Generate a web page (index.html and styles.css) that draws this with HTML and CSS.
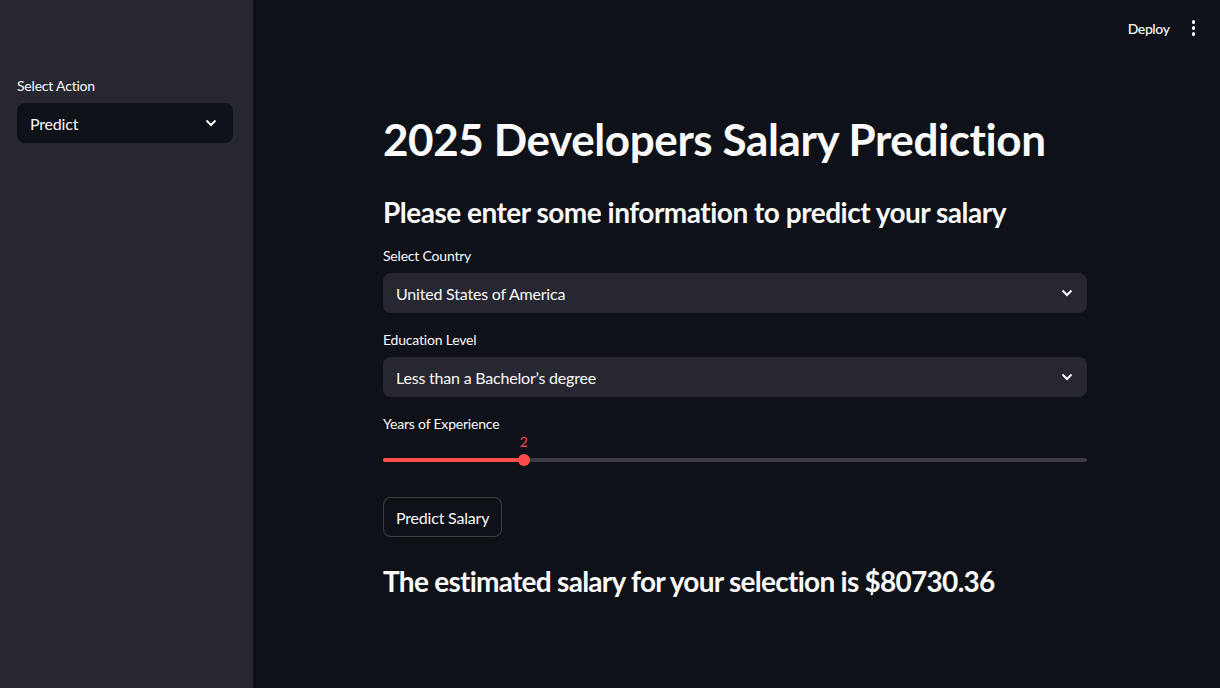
FILE: index.html
```html
<!DOCTYPE html>
<html lang="en">
<head>
<meta charset="utf-8">
<title>Salary Prediction</title>
<link rel="stylesheet" href="styles.css">
</head>
<body>
<div class="app">
  <aside class="sidebar">
    <div class="field">
      <div class="label">Select Action</div>
      <div class="select select-dark">
        <span>Predict</span>
        <svg class="chev" width="12" height="8" viewBox="0 0 12 8"><path d="M1.5 1.5 L6 6 L10.5 1.5" fill="none" stroke="#fafafa" stroke-width="2"/></svg>
      </div>
    </div>
  </aside>
  <main class="main">
    <header class="topbar">
      <span class="deploy">Deploy</span>
      <span class="kebab"><i></i><i></i><i></i></span>
    </header>
    <section class="content">
      <h1 class="title">2025 Developers Salary Prediction</h1>
      <h3 class="subtitle">Please enter some information to predict your salary</h3>
      <div class="field">
        <div class="label">Select Country</div>
        <div class="select">
          <span>United States of America</span>
          <svg class="chev" width="12" height="8" viewBox="0 0 12 8"><path d="M1.5 1.5 L6 6 L10.5 1.5" fill="none" stroke="#fafafa" stroke-width="2"/></svg>
        </div>
      </div>
      <div class="field">
        <div class="label">Education Level</div>
        <div class="select">
          <span>Less than a Bachelor’s degree</span>
          <svg class="chev" width="12" height="8" viewBox="0 0 12 8"><path d="M1.5 1.5 L6 6 L10.5 1.5" fill="none" stroke="#fafafa" stroke-width="2"/></svg>
        </div>
      </div>
      <div class="field">
        <div class="label">Years of Experience</div>
        <div class="slider">
          <div class="track">
            <div class="fill" style="width: 20%"></div>
            <div class="thumb" style="left: 20%"><span class="val">2</span></div>
          </div>
        </div>
      </div>
      <button class="btn">Predict Salary</button>
      <h3 class="result">The estimated salary for your selection is $80730.36</h3>
    </section>
  </main>
</div>
</body>
</html>
```

FILE: styles.css
```css
* { box-sizing: border-box; }
html, body { margin: 0; padding: 0; height: 100%; }
body {
  background: #0e1117;
  color: #fafafa;
  font-family: "Source Sans Pro", "Lato", "Noto Sans", sans-serif;
}
.app { display: flex; height: 688px; }
.sidebar {
  width: 253px;
  flex: none;
  background: #262730;
  padding: 76px 20px 0 17px;
}
.main { flex: 1; display: flex; flex-direction: column; }
.topbar {
  height: 56px;
  display: flex;
  align-items: center;
  justify-content: flex-end;
  padding-right: 25px;
  gap: 22px;
}
.deploy { font-size: 14px; font-weight: 500; letter-spacing: -0.4px; }
.kebab { display: flex; flex-direction: column; gap: 2.5px; }
.kebab i { display: block; width: 3.5px; height: 3.5px; border-radius: 50%; background: #fafafa; }
.content {
  width: 704px;
  margin-left: 130px;
  padding-top: 55px;
}
.title {
  margin: 0;
  font-size: 44px;
  font-weight: 700;
  line-height: 56px;
  letter-spacing: -0.4px;
}
.subtitle {
  margin: 27px 0 0;
  font-size: 28px;
  font-weight: 700;
  line-height: 36px;
  letter-spacing: -0.5px;
}
.content .field { margin-bottom: 17px; }
.content .subtitle + .field { margin-top: 16px; }
.label {
  font-size: 14px;
  line-height: 20px;
  margin-bottom: 7px;
  letter-spacing: -0.2px;
}
.select {
  height: 40px;
  border-radius: 8px;
  background: #262730;
  display: flex;
  align-items: center;
  justify-content: space-between;
  padding: 0 14px 0 13px;
  font-size: 16px;
  letter-spacing: -0.2px;
}
.select-dark { background: #0e1117; padding-right: 16px; }
.chev { display: block; }
.slider { height: 28px; padding-top: 17px; }
.track {
  position: relative;
  height: 4px;
  border-radius: 2px;
  background: #3a3b44;
}
.fill { height: 4px; background: #ff4b4b; border-radius: 2px; }
.thumb {
  position: absolute;
  top: -4px;
  width: 12px;
  height: 12px;
  margin-left: -6px;
  border-radius: 50%;
  background: #ff4b4b;
}
.val {
  position: absolute;
  top: -20px;
  left: 50%;
  transform: translateX(-50%);
  font-size: 14px;
  line-height: 16px;
  color: #ff4b4b;
}
.btn {
  display: block;
  margin-top: 28px;
  height: 40px;
  padding: 0 12px;
  border-radius: 8px;
  border: 1px solid rgba(250, 250, 250, 0.2);
  background: #0e1117;
  color: #fafafa;
  font-family: inherit;
  font-size: 16px;
  letter-spacing: -0.2px;
}
.result {
  margin: 26px 0 0;
  font-size: 28px;
  font-weight: 700;
  line-height: 36px;
  letter-spacing: -0.73px;
}
```
